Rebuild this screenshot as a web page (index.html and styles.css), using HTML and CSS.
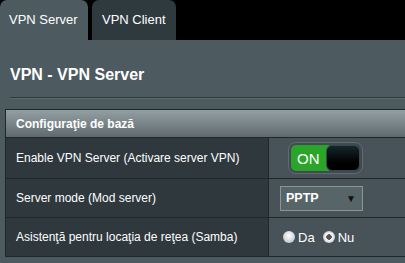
FILE: index.html
```html
<!DOCTYPE html>
<html lang="ro">
<head>
  <meta charset="UTF-8" />
  <title>VPN Server</title>
  <link rel="stylesheet" href="styles.css">
</head>
<body>

  <!-- Tab-uri -->
  <div class="tabs">
    <div class="tab active">VPN Server</div>
    <div class="tab">VPN Client</div>
  </div>

  <div class="panel">
    <h2 class="title">VPN - VPN Server</h2>
    <div class="divider"></div>

    <div class="settings">
      <div class="settings-head">Configuraţie de bază</div>

      <div class="row row-first">
        <div class="label">Enable VPN Server (Activare server VPN)</div>
        <div class="value">
          <div class="switch">
            <span class="switch-on">ON</span>
            <span class="switch-knob"></span>
          </div>
        </div>
      </div>

      <div class="row">
        <div class="label">Server mode (Mod server)</div>
        <div class="value">
          <div class="select">
            <span>PPTP</span>
            <span class="arrow">▼</span>
          </div>
        </div>
      </div>

      <div class="row">
        <div class="label">Asistenţă pentru locaţia de reţea (Samba)</div>
        <div class="value radios">
          <label class="radio"><span class="dot"></span>Da</label>
          <label class="radio"><span class="dot checked"></span>Nu</label>
        </div>
      </div>
    </div>
  </div>

</body>
</html>
```

FILE: styles.css
```css
* {
  box-sizing: border-box;
}

body {
  margin: 0;
  background: #000;
  font-family: "Liberation Sans", Arial, sans-serif;
  color: #fff;
  overflow: hidden;
  width: 440px;
}

.tabs {
  display: flex;
  height: 40px;
}

.tab {
  height: 40px;
  padding: 12px 0 0 9px;
  font-size: 13px;
  border-radius: 7px 7px 0 0;
  background: #2f3a3f;
  color: #fff;
}

.tab.active {
  width: 88px;
  margin-right: 4px;
  background: #4d5a5f;
}

.tab:not(.active) {
  width: 84px;
  padding-left: 10px;
}

.panel {
  background: #4d5a5f;
  padding: 25px 0 7px 5px;
}

.title {
  margin: 0 0 12px 5px;
  font-size: 16px;
  line-height: 20px;
  font-weight: bold;
}

.divider {
  margin-left: 5px;
  border-top: 1px solid #2f3a3f;
  border-bottom: 1px solid #5c686d;
  margin-bottom: 10px;
}

.settings {
  width: 430px;
  border: 1px solid #1f272b;
}

.settings-head {
  height: 28px;
  padding: 7px 0 0 10px;
  font-size: 12px;
  font-weight: bold;
  background: linear-gradient(#949fa2, #5e6a6f);
  border-bottom: 1px solid #1f272b;
}

.row {
  display: flex;
  height: 39px;
  border-bottom: 1px solid #1f272b;
}

.row:last-child {
  border-bottom: none;
  height: 38px;
}

.row-first {
  height: 41px;
}

.label {
  width: 263px;
  display: flex;
  align-items: center;
  padding-left: 10px;
  font-size: 12px;
  background: #2e383d;
  border-right: 1px solid #1f272b;
}

.value {
  flex: 1;
  display: flex;
  align-items: center;
  background: #475358;
}

.switch {
  display: flex;
  width: 75px;
  height: 32px;
  margin-left: 19px;
  padding: 2px;
  border: 1px solid #5f6b70;
  border-radius: 8px;
  background: #3f4b50;
}

.switch-on {
  width: 38px;
  padding: 5px 0 0 6px;
  font-size: 15px;
  background: #2aa52a;
  border-radius: 5px 0 0 5px;
}

.switch-knob {
  flex: 1;
  margin-left: -3px;
  background: linear-gradient(#17262b, #000 70%);
  border: 1px solid #3a474c;
  border-radius: 6px;
}

.select {
  display: flex;
  justify-content: space-between;
  align-items: center;
  width: 83px;
  height: 25px;
  margin-left: 11px;
  padding: 0 6px 0 5px;
  border: 1px solid #8a9599;
  background: #576569;
  font-size: 12.5px;
  font-weight: bold;
}

.arrow {
  font-size: 10px;
  color: #111;
}

.radios {
  padding-left: 14px;
  gap: 8px;
}

.radio {
  display: flex;
  align-items: center;
  font-size: 13px;
}

.dot {
  width: 12px;
  height: 12px;
  margin: 0 3px 0 0;
  border-radius: 50%;
  background: radial-gradient(circle at 50% 40%, #fff, #c9cdcf 70%, #a7adb0);
}

.dot.checked {
  background: radial-gradient(circle, #555 0 2.5px, #fff 3px, #c9cdcf 70%, #a7adb0);
}
```
